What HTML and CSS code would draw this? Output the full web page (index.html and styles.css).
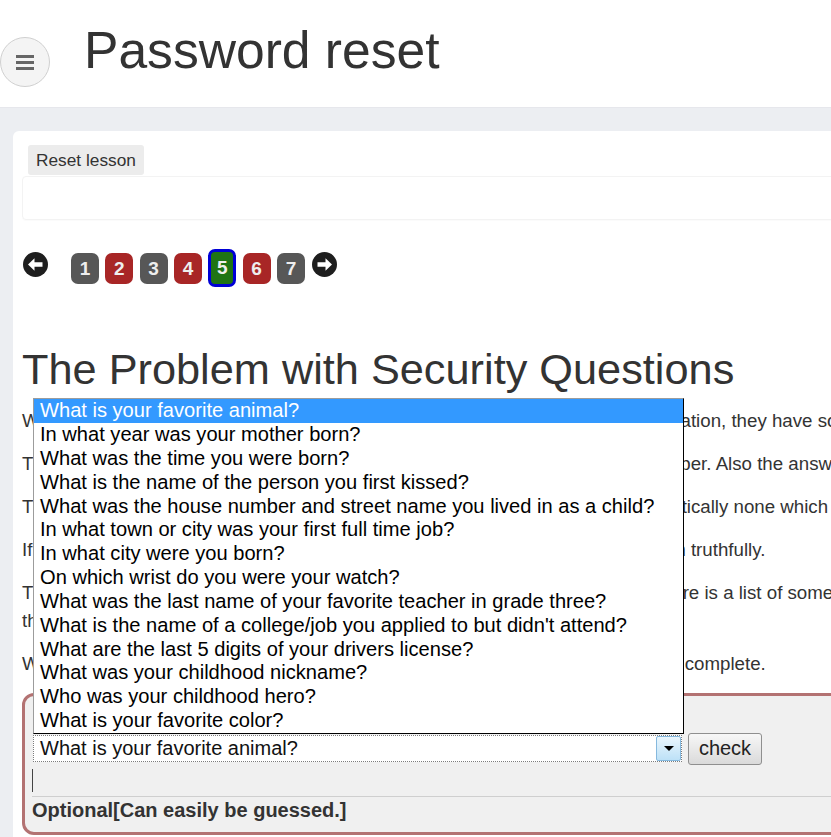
FILE: index.html
```html
<!DOCTYPE html>
<html lang="en">
<head>
<meta charset="utf-8">
<title>Password reset</title>
<link rel="stylesheet" href="styles.css">
</head>
<body>
<header class="topbar">
  <button class="menu-btn" type="button" aria-label="Menu"><span></span><span></span><span></span></button>
  <h1 class="page-title">Password reset</h1>
</header>
<main class="main">
  <section class="card">
    <button class="reset-btn" type="button">Reset lesson</button>
    <div class="lesson-msg"></div>
    <nav class="pager">
      <svg class="arrow arrow-left" viewBox="0 0 25 25" width="25" height="25" aria-hidden="true">
        <circle cx="12.5" cy="12.5" r="12.5" fill="#1e1e1e"/>
        <path d="M5 12.5 L11.5 6.2 V10.3 H19.5 V14.7 H11.5 V18.8 Z" fill="#fff"/>
      </svg>
      <div class="pages">
        <span class="pg pg-grey">1</span>
        <span class="pg pg-red">2</span>
        <span class="pg pg-grey">3</span>
        <span class="pg pg-red">4</span>
        <span class="pg pg-active">5</span>
        <span class="pg pg-red">6</span>
        <span class="pg pg-grey">7</span>
      </div>
      <svg class="arrow arrow-right" viewBox="0 0 25 25" width="25" height="25" aria-hidden="true">
        <circle cx="12.5" cy="12.5" r="12.5" fill="#1e1e1e"/>
        <path d="M20 12.5 L13.5 6.2 V10.3 H5.5 V14.7 H13.5 V18.8 Z" fill="#fff"/>
      </svg>
    </nav>

    <h2 class="lesson-title">The Problem with Security Questions</h2>
    <p>While security questions may at first seem like a nice and easy way of authentication, they have some problems.</p>
    <p>The "perfect" security question should be hard to crack, but very easy to remember. Also the answer needs to fit.</p>
    <p>There are only a handful of actually great security questions out there, plus practically none which fulfill all criteria.</p>
    <p>If you use security questions to validate users, make sure that they answer them truthfully.</p>
    <p>There are several security questions which can easily be guessed by others. Here is a list of some common questions, then try to find out which of them are easily guessable.</p>
    <p>When you have found all the weak questions, the assignment will be marked as complete.</p>

    <form class="attack">
      <div class="q-row">
        <div class="select-wrap">
          <div class="select-box">
            <span class="select-text">What is your favorite animal?</span>
            <span class="select-btn"><span class="tri"></span></span>
          </div>
          <ul class="dropdown">
            <li class="sel">What is your favorite animal?</li>
            <li>In what year was your mother born?</li>
            <li>What was the time you were born?</li>
            <li>What is the name of the person you first kissed?</li>
            <li>What was the house number and street name you lived in as a child?</li>
            <li>In what town or city was your first full time job?</li>
            <li>In what city were you born?</li>
            <li>On which wrist do you were your watch?</li>
            <li>What was the last name of your favorite teacher in grade three?</li>
            <li>What is the name of a college/job you applied to but didn't attend?</li>
            <li>What are the last 5 digits of your drivers license?</li>
            <li>What was your childhood nickname?</li>
            <li>Who was your childhood hero?</li>
            <li>What is your favorite color?</li>
          </ul>
        </div>
        <button class="check-btn" type="button">check</button>
      </div>
      <div class="answer"></div>
      <hr class="sep">
      <div class="feedback">Optional[Can easily be guessed.]</div>
    </form>
  </section>
</main>
</body>
</html>
```

FILE: styles.css
```css
html, body {
  overflow: hidden;
}
body {
  margin: 0;
  font-family: "Liberation Sans", Arial, sans-serif;
  color: #333;
  background: #eceef2;
}

.topbar {
  height: 107px;
  background: #fff;
  border-bottom: 1px solid #e6e7ec;
  display: flex;
  align-items: flex-start;
}
.menu-btn {
  margin-top: 37px;
  width: 50px;
  height: 50px;
  border-radius: 50%;
  border: 1px solid #d0d0d0;
  background: #f4f4f4;
  box-sizing: border-box;
  padding: 0;
  display: flex;
  flex-direction: column;
  align-items: center;
  justify-content: center;
  gap: 3px;
}
.menu-btn span {
  display: block;
  width: 18px;
  height: 3px;
  background: #666;
}
.page-title {
  margin: 20px 0 0 34px;
  font-size: 51.6px;
  line-height: 60px;
  font-weight: normal;
  color: #333;
}

.main {
  padding: 23px 0 0 13px;
}
.card {
  width: 1100px;
  min-height: 740px;
  background: #fff;
  border-radius: 6px;
  padding: 14px 0 0 9px;
  box-sizing: border-box;
}
.reset-btn {
  display: block;
  margin-left: 6px;
  height: 30px;
  padding: 0 8px;
  border: 0;
  border-radius: 3px;
  background: #ececec;
  font-family: "Liberation Sans", Arial, sans-serif;
  font-size: 17.3px;
  color: #333;
}
.lesson-msg {
  margin-top: 1px;
  height: 44px;
  border: 1px solid #f3f3f3;
  border-radius: 4px;
  box-sizing: border-box;
  box-shadow: 0 1px 1px rgba(0, 0, 0, 0.02);
}

.pager {
  margin-top: 29px;
  height: 38px;
  display: flex;
  align-items: flex-start;
}
.arrow {
  display: block;
  margin-top: 3px;
}
.arrow-left {
  margin-left: 1px;
}
.pages {
  display: flex;
  gap: 6.33px;
  margin-left: 23px;
  margin-right: 7px;
}
.pg {
  width: 28px;
  height: 31px;
  margin-top: 4px;
  border-radius: 7px;
  box-sizing: border-box;
  display: flex;
  align-items: center;
  justify-content: center;
  color: #eeeeee;
  font-weight: bold;
  font-size: 19px;
}
.pg-grey { background: #575757; }
.pg-red { background: #a82626; }
.pg-active {
  background: #1f7414;
  border: 3px solid #0000d6;
  height: 38px;
  margin-top: 0;
}

.lesson-title {
  margin: 58px 0 13.5px;
  font-size: 43.3px;
  line-height: 48px;
  font-weight: normal;
  color: #333;
}
.card p {
  width: 1000px;
  margin: 0 0 15px;
  font-size: 18.7px;
  line-height: 28px;
  color: #333;
}

.attack {
  margin: 0;
  border: 3px solid #b37272;
  border-radius: 12px;
  background: #f0f0f0;
  padding: 37px 0 10px 7px;
}
.q-row {
  display: flex;
  align-items: center;
}
.select-wrap {
  position: relative;
  margin-left: 1px;
  width: 649px;
}
.select-box {
  height: 27px;
  border: 1px dotted #7c7c7c;
  background: #fff;
  box-sizing: border-box;
  display: flex;
  align-items: center;
  justify-content: space-between;
}
.select-text {
  padding-left: 6px;
  font-size: 20px;
  color: #111;
}
.select-btn {
  width: 25px;
  height: 25px;
  box-sizing: border-box;
  border: 1px solid #86b9de;
  border-radius: 2px;
  background: linear-gradient(#eaf6fd, #bde1f7);
  display: flex;
  align-items: center;
  justify-content: center;
}
.tri {
  width: 0;
  height: 0;
  border-left: 5px solid transparent;
  border-right: 5px solid transparent;
  border-top: 5px solid #000;
}
.dropdown {
  position: absolute;
  left: 0;
  bottom: calc(100% + 1px);
  z-index: 5;
  width: 651px;
  margin: 0;
  padding: 0;
  list-style: none;
  background: #fff;
  border: 1px solid #000;
  border-left-color: #9c9c9c;
  border-top-color: #9c9c9c;
  box-sizing: border-box;
}
.dropdown li {
  height: 23.85px;
  line-height: 23.85px;
  padding-left: 6px;
  font-size: 20.1px;
  color: #000;
  white-space: nowrap;
}
.dropdown li.sel {
  background: #3399ff;
  color: #fff;
}
.check-btn {
  margin-left: 6px;
  width: 74px;
  height: 32px;
  padding: 0;
  border: 1px solid #8f8f8f;
  border-radius: 3px;
  background: linear-gradient(#f7f7f7, #dadada);
  font-family: "Liberation Sans", Arial, sans-serif;
  font-size: 20px;
  color: #222;
}
.answer {
  margin-top: 4px;
  height: 23px;
  border-left: 1px solid #444;
}
.sep {
  margin: 4px 0 0;
  border: 0;
  border-top: 1px solid #cfcfcf;
}
.feedback {
  margin-top: 1px;
  font-size: 20px;
  line-height: 24px;
  font-weight: bold;
  color: #333;
}
```
